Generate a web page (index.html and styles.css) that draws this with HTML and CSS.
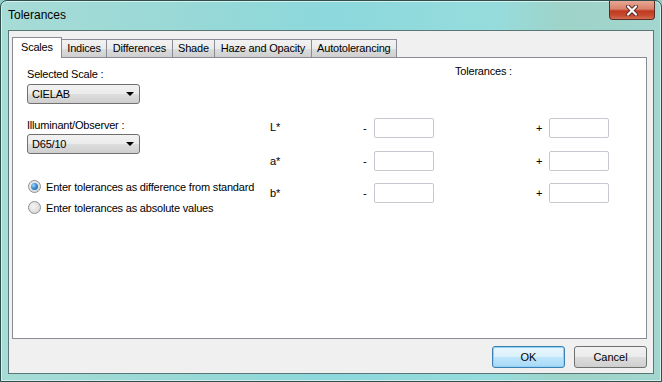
FILE: index.html
```html
<!DOCTYPE html>
<html lang="en">
<head>
<meta charset="UTF-8">
<title>Tolerances</title>
<link rel="stylesheet" href="styles.css">
</head>
<body>

<!-- Ventana de dialogo -->
<div class="window">
    <div class="titlebar">
        <span class="title">Tolerances</span>
        <div class="close-btn">
            <svg width="16" height="11" viewBox="0 0 16 11">
                <path d="M4 1.5 L12 9.5 M12 1.5 L4 9.5" stroke="#5a2a22" stroke-width="4" stroke-linecap="round"/>
                <path d="M4 1.5 L12 9.5 M12 1.5 L4 9.5" stroke="#ffffff" stroke-width="2.2" stroke-linecap="round"/>
            </svg>
        </div>
    </div>

    <div class="client">
        <!-- Pestañas -->
        <div class="tabs">
            <div class="tab selected">Scales</div>
            <div class="tab">Indices</div>
            <div class="tab">Differences</div>
            <div class="tab">Shade</div>
            <div class="tab">Haze and Opacity</div>
            <div class="tab">Autotolerancing</div>
        </div>

        <div class="panel">
            <div class="left-col">
                <div class="label">Selected Scale :</div>
                <div class="combo"><span>CIELAB</span><span class="arrow"></span></div>

                <div class="label label-gap">Illuminant/Observer :</div>
                <div class="combo combo-tight"><span>D65/10</span><span class="arrow"></span></div>

                <div class="radios">
                    <label class="radio-row"><span class="radio checked"></span>Enter tolerances as difference from standard</label>
                    <label class="radio-row"><span class="radio"></span>Enter tolerances as absolute values</label>
                </div>
            </div>

            <div class="right-col">
                <div class="tol-title">Tolerances :</div>
                <div class="tol-grid">
                    <span class="axis first">L*</span><span class="sign">-</span><span class="box"></span>
                    <span></span><span class="sign">+</span><span class="box"></span>

                    <span class="axis">a*</span><span class="sign">-</span><span class="box"></span>
                    <span></span><span class="sign">+</span><span class="box"></span>

                    <span class="axis">b*</span><span class="sign">-</span><span class="box"></span>
                    <span></span><span class="sign">+</span><span class="box"></span>
                </div>
            </div>
        </div>

        <!-- Botones -->
        <div class="buttons">
            <button class="btn default">OK</button>
            <button class="btn">Cancel</button>
        </div>
    </div>
</div>

</body>
</html>
```

FILE: styles.css
```css
/* Estilos generales */
body {
    margin: 0;
    font-family: "Liberation Sans", Arial, sans-serif;
    font-size: 11px;
    letter-spacing: -0.2px;
    color: #000;
    background: #8fcfcb;
}

.window {
    width: 662px;
    height: 382px;
    box-sizing: border-box;
    border: 1px solid #2f4f4c;
    border-radius: 7px 7px 0 0;
    background: linear-gradient(90deg, #a7dbd6 0%, #9ad9d6 25%, #8cd8dc 50%, #96dcdd 75%, #9ed3c8 85%, #a2d6cf 100%);
    box-shadow: inset 0 0 0 1px #d6f0ee;
    display: flex;
    flex-direction: column;
}

/* Barra de titulo */
.titlebar {
    height: 29px;
    display: flex;
    justify-content: space-between;
    align-items: flex-start;
}

.title {
    font-size: 12px;
    letter-spacing: 0;
    padding: 7px 0 0 7px;
}

.close-btn {
    width: 46px;
    height: 19px;
    margin-right: 6px;
    box-sizing: border-box;
    border: 1px solid #5c2e26;
    border-top: none;
    border-radius: 0 0 4px 4px;
    background: linear-gradient(180deg, #e8a795 0%, #d9826c 45%, #c0391f 55%, #c64a2f 80%, #d46c50 100%);
    display: flex;
    align-items: center;
    justify-content: center;
}

/* Area cliente */
.client {
    flex: 1;
    margin: 0 7px 7px;
    border: 1px solid #5a7775;
    background: #f0f0f0;
    display: flex;
    flex-direction: column;
    padding: 6px 6px 0 3px;
}

/* Pestañas */
.tabs {
    display: flex;
    align-items: flex-end;
    height: 20px;
    position: relative;
    z-index: 1;
}

.tab {
    height: 18px;
    box-sizing: border-box;
    padding: 2px 5.5px 0;
    border: 1px solid #898c95;
    border-bottom: none;
    margin-left: -1px;
    background: linear-gradient(180deg, #f2f2f2 0%, #ebebeb 50%, #dddddd 51%, #cfcfcf 100%);
    white-space: nowrap;
}

.tab.selected {
    height: 21px;
    margin-left: 0;
    padding: 3px 8px 0;
    background: #fff;
    margin-bottom: -1px;
}

.tab.selected + .tab {
    margin-left: 0;
    border-left: none;
}

/* Panel principal */
.panel {
    height: 282px;
    box-sizing: border-box;
    border: 1px solid #898c95;
    background: #fff;
    display: flex;
    padding-left: 14px;
}

.left-col {
    flex: 0 0 243px;
    padding-top: 9px;
}

.label {
    line-height: 15px;
}

.label-gap {
    margin-top: 14px;
}

.combo {
    width: 113px;
    height: 20px;
    margin-top: 2px;
    box-sizing: border-box;
    border: 1px solid #707070;
    border-radius: 3px;
    background: linear-gradient(180deg, #f2f2f2 0%, #ebebeb 50%, #dddddd 51%, #cfcfcf 100%);
    display: flex;
    align-items: center;
    justify-content: space-between;
    padding: 0 4px;
}

.combo-tight {
    margin-top: 1px;
}

.arrow {
    width: 0;
    height: 0;
    border-left: 4px solid transparent;
    border-right: 4px solid transparent;
    border-top: 4px solid #000;
    margin-right: 1px;
}

.radios {
    margin-top: 24px;
    display: flex;
    flex-direction: column;
    gap: 4px;
}

.radio-row {
    display: flex;
    align-items: center;
    height: 17px;
    gap: 5px;
    padding-left: 1px;
}

.radio {
    width: 13px;
    height: 13px;
    box-sizing: border-box;
    border-radius: 50%;
    border: 1px solid #8e8f8f;
    background: radial-gradient(circle at 40% 40%, #f4f4f4 0%, #dcdcdc 70%, #cfcfcf 100%);
    display: flex;
    align-items: center;
    justify-content: center;
}

.radio.checked::after {
    content: "";
    width: 7px;
    height: 7px;
    border-radius: 50%;
    background: radial-gradient(circle at 35% 35%, #9fd6f7 0%, #3d8fd0 45%, #1c5a96 100%);
}

/* Tolerancias */
.right-col {
    padding-top: 6px;
}

.tol-title {
    line-height: 15px;
    margin-left: 185px;
}

.tol-grid {
    margin-top: 39px;
    display: grid;
    grid-template-columns: 93px 11px 60px 102px 13px 60px;
    grid-auto-rows: 20px;
    row-gap: 12.5px;
    align-items: center;
}

.axis.first {
    margin-top: -3px;
}

.box {
    height: 20px;
    box-sizing: border-box;
    border: 1px solid #c6c9cf;
    border-radius: 2px;
    background: #fff;
}

/* Botones */
.buttons {
    display: flex;
    justify-content: flex-end;
    gap: 9px;
    margin-top: 7px;
}

.btn {
    width: 73px;
    height: 22px;
    font-family: "Liberation Sans", Arial, sans-serif;
    font-size: 11px;
    border: 1px solid #707070;
    border-radius: 3px;
    background: linear-gradient(180deg, #f2f2f2 0%, #ebebeb 50%, #dddddd 51%, #cfcfcf 100%);
    color: #000;
    padding: 0;
}

.btn.default {
    border-color: #3c7fb1;
    background: linear-gradient(180deg, #eaf6fd 0%, #d9f0fc 50%, #bee6fd 51%, #a7d9f5 100%);
    box-shadow: inset 0 0 0 1px #8fd3f8;
}
```
